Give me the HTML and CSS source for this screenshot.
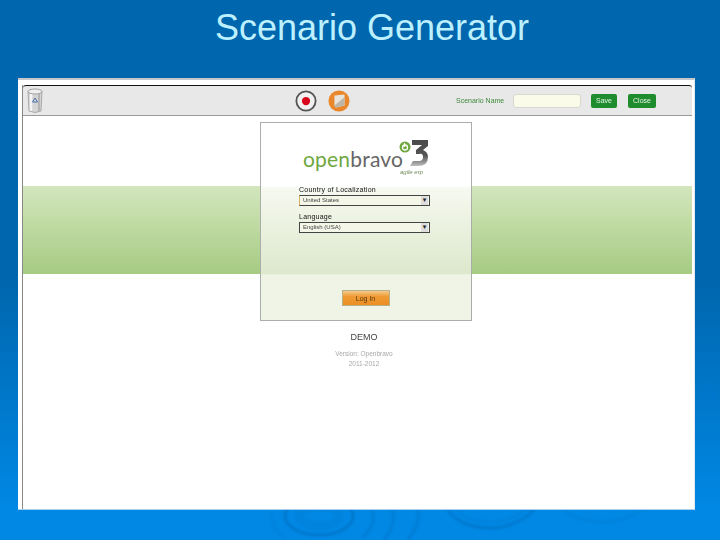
FILE: index.html
```html
<!DOCTYPE html>
<html lang="en">
<head>
<meta charset="utf-8">
<title>Scenario Generator</title>
<link rel="stylesheet" href="styles.css">
</head>
<body>
<main class="slide">
  <svg class="ripples" viewBox="0 0 720 540" aria-hidden="true">
    <g fill="none" stroke="#0074c8">
      <ellipse cx="319" cy="516" rx="34" ry="19" stroke-width="3" opacity=".8"/>
      <ellipse cx="319" cy="516" rx="20" ry="10" stroke-width="8" opacity=".25"/>
      <path d="M372 510c4 10-2 22-10 28M392 510c4 10-1 22-8 30M418 510c2 10-4 22-10 30" stroke-width="2.500" opacity=".6"/>
      <path d="M272 512c-2 12 6 22 14 28" stroke-width="2" opacity=".3"/>
      <path d="M448 510c8 12 24 18 42 18s34-8 44-18" stroke-width="3" opacity=".7"/>
      <path d="M456 510c8 8 20 12 34 12s26-4 34-12" stroke-width="2" opacity=".3"/>
      <path d="M564 510c10 8 24 12 40 12s28-5 38-12" stroke-width="2" opacity=".3"/>
      <path d="M698 384c8 6 8 16 0 23M703 384c10 7 10 18 1 26M708 382c8 8 6 18 2 24" stroke="#0078d0" stroke-width="2" opacity=".7"/>
    </g>
  </svg>
  <h1 class="title">Scenario Generator</h1>
  <section class="shot">
    <div class="app">
      <header class="toolbar">
        <svg class="bin" viewBox="0 0 16 26" aria-hidden="true">
          <path d="M1 3h14l-1 20q-6 3-12 0z" fill="#d4d4d4" stroke="#a8a8a8"/>
          <ellipse cx="8" cy="3.500" rx="7" ry="2.500" fill="#efefef" stroke="#a0a0a0"/>
          <path d="M4 6v17" stroke="#f4f4f4" stroke-width="2.500"/>
          <path d="M12 6v17" stroke="#b4b4b4" stroke-width="2"/>
          <path d="M8 10l2.500 4h-5z" fill="none" stroke="#4a6fa8"/>
        </svg>
        <div class="tools">
          <svg class="tool" viewBox="0 0 24 24" aria-hidden="true">
            <circle cx="12" cy="12" r="10.500" fill="#f1f1f1" stroke="#555" stroke-width="2"/>
            <circle cx="12" cy="12" r="4.500" fill="#d9071c"/>
          </svg>
          <svg class="tool" viewBox="0 0 24 24" aria-hidden="true">
            <circle cx="12" cy="12" r="11.500" fill="#e9872a"/>
            <path d="M7 6l11-1v12l-9 2q-2 0-2-2z" fill="#e8e4dc"/>
            <path d="M7 17l11-9v9l-9 2q-2 0-2-2z" fill="#bdb5a8"/>
          </svg>
        </div>
        <div class="scenario">
          <label class="scenario-label" for="sn">Scenario Name</label>
          <input class="scenario-input" id="sn" type="text">
          <button class="green-btn" type="button">Save</button>
          <button class="green-btn" type="button">Close</button>
        </div>
      </header>
      <div class="stage">
        <div class="band"></div>
        <form class="card">
          <div class="logo">
            <span class="logo-word"><span class="logo-open">open</span>bravo</span>
            <svg class="logo-leaf" viewBox="0 0 12 12" aria-hidden="true">
              <circle cx="6" cy="6" r="5.500" fill="#6fa83f"/>
              <circle cx="6" cy="6.500" r="2.500" fill="none" stroke="#fff" stroke-width="1.300"/>
              <path d="M5.500 2v4" stroke="#fff" stroke-width="1.300"/>
            </svg>
            <svg class="logo-three" viewBox="0 0 18 26" aria-hidden="true">
              <defs>
                <linearGradient id="threeFill" x1="0" y1="0" x2="0" y2="1">
                  <stop offset="0" stop-color="#4a4a4a"/>
                  <stop offset=".6" stop-color="#555"/>
                  <stop offset="1" stop-color="#bdbdbd"/>
                </linearGradient>
              </defs>
              <path d="M2 0h16v6l-5 4q5 2 5 7 0 9-10 9H0l3-5h6q4 0 4-4t-4-3H6v-4l6-5H2z" fill="url(#threeFill)"/>
            </svg>
            <span class="logo-tag">agile erp</span>
          </div>
          <label class="field-label">Country of Localization</label>
          <div class="select first"><span class="select-text">United States</span><i class="select-arrow">▾</i></div>
          <label class="field-label lang">Language</label>
          <div class="select"><span class="select-text">English (USA)</span><i class="select-arrow">▾</i></div>
          <button class="login" type="button">Log In</button>
        </form>
        <div class="demo">
          <strong class="demo-title">DEMO</strong>
          <span class="demo-line">Version: Openbravo</span>
          <span class="demo-line">2011-2012</span>
        </div>
      </div>
    </div>
  </section>
</main>
</body>
</html>
```
FILE: styles.css
```css
* { box-sizing: border-box; }
html, body { margin: 0; padding: 0; }
body { width: 720px; height: 540px; overflow: hidden; font-family: "Liberation Sans", Arial, sans-serif; }
.slide {
  position: relative;
  width: 720px;
  height: 540px;
  display: flex;
  flex-direction: column;
  align-items: flex-start;
  background: linear-gradient(180deg, #0066ae 0%, #0066ae 52%, #0088e4 94%, #0088e4 100%);
}
.ripples { position: absolute; inset: 0; width: 720px; height: 540px; filter: blur(.8px); }
.title {
  position: relative;
  margin: 0;
  width: 744px;
  height: 78px;
  padding-top: 7px;
  text-align: center;
  font-size: 36px;
  line-height: 42px;
  font-weight: 400;
  color: #bdf0ff;
}
.shot {
  position: relative;
  margin-left: 18px;
  width: 677px;
  height: 432px;
  padding: 5px 2px 0 4px;
  background: #fff;
  border-top: 2px solid #c4c8cc;
  border-bottom: 1px solid #a8d0f0;
  border-right: 1px solid #e4e8f0;
}
.app { height: 100%; border-left: 1px solid #888; }
.toolbar {
  display: flex;
  align-items: center;
  height: 31px;
  padding-left: 4px;
  background: #e8e8e8;
  border-top: 1px solid #111;
  border-bottom: 1px solid #999;
  border-radius: 3px 3px 0 0;
}
.bin { width: 16px; height: 26px; flex: none; }
.tools { display: flex; gap: 11px; margin-left: 252px; }
.tool { width: 22px; height: 24px; display: block; }
.scenario { display: flex; align-items: center; margin-left: 106px; }
.scenario-label { font-size: 7px; color: #3f8a3a; width: 57px; white-space: nowrap; filter: blur(.3px); }
.scenario-input {
  width: 68px;
  height: 14px;
  padding: 0;
  border: 1px solid #d8d8d0;
  border-radius: 3px;
  background: #fbfbe9;
}
.green-btn {
  height: 14px;
  margin-left: 10px;
  width: 26px;
  padding: 0;
  border: 0;
  border-radius: 2px;
  background: #1f8c2d;
  color: #e8f5e8;
  font: 7px "Liberation Sans", Arial, sans-serif;
  filter: blur(.2px);
}
.green-btn + .green-btn { margin-left: 11px; width: 28px; }
.stage { position: relative; height: 394px; padding-top: 70px; }
.band { height: 88px; background: linear-gradient(180deg, #d3e6bd 0%, #a6cb82 100%); }
.card {
  position: absolute;
  left: 237px;
  top: 6px;
  width: 212px;
  height: 199px;
  padding: 62px 41px 0 38px;
  display: flex;
  flex-direction: column;
  border: 1px solid #a9aea9;
  background: linear-gradient(180deg, #fff 0%, #fff 32%, #f6f9f0 33%, #dde8cc 76.500%, #eff4e6 77%, #eff4e6 100%);
}
.logo { position: absolute; left: 42px; top: 12px; width: 130px; height: 46px; }
.logo-word {
  position: absolute;
  left: 0;
  top: 11px;
  font: 400 21px/26px Lato, "Liberation Sans", sans-serif;
  letter-spacing: .2px;
  color: #666;
  white-space: nowrap;
}
.logo-open { color: #6fa83f; }
.logo-leaf { position: absolute; left: 96px; top: 6px; width: 12px; height: 12px; }
.logo-three { position: absolute; left: 107px; top: 5px; width: 18px; height: 26px; }
.logo-tag { position: absolute; left: 97px; top: 33px; font: italic 6px/8px "Liberation Sans", Arial, sans-serif; color: #6f8f5a; filter: blur(.2px); }
.field-label {
  font-size: 7px;
  line-height: 9px;
  height: 9px;
  color: #111;
  letter-spacing: .25px;
  filter: blur(.2px);
}
.field-label.lang { margin-top: 6px; }
.select {
  display: flex;
  align-items: center;
  justify-content: space-between;
  height: 11px;
  margin-top: 1px;
  padding: 0 1px 0 3px;
  border: 1px solid #444;
  background: #f4f6e8;
}
.select.first { border-left-color: #d8b060; }
.select-text { font-size: 6px; line-height: 9px; color: #444; filter: blur(.4px); }
.select-arrow {
  width: 7px;
  height: 9px;
  background: #ddd;
  font: 7px/9px "DejaVu Sans", sans-serif;
  text-align: center;
  color: #222;
}
.login {
  align-self: center;
  margin-top: 57px;
  width: 48px;
  height: 16px;
  margin-left: 2px;
  padding: 0;
  border: 1px solid #b5b08a;
  background: linear-gradient(180deg, #f5c98a 0%, #ee9a33 40%, #ec8f25 100%);
  color: #5a3a10;
  font: 7px "Liberation Sans", Arial, sans-serif;
  filter: blur(.2px);
}
.demo {
  position: absolute;
  left: 237px;
  top: 215px;
  width: 212px;
  display: flex;
  flex-direction: column;
  align-items: center;
  padding-right: 4px;
}
.demo-title { font-size: 9px; line-height: 12px; font-weight: 400; color: #444; margin-bottom: 6px; filter: blur(.2px); }
.demo-line { font-size: 6.500px; line-height: 10px; color: #a8a8a8; filter: blur(.4px); }
```
